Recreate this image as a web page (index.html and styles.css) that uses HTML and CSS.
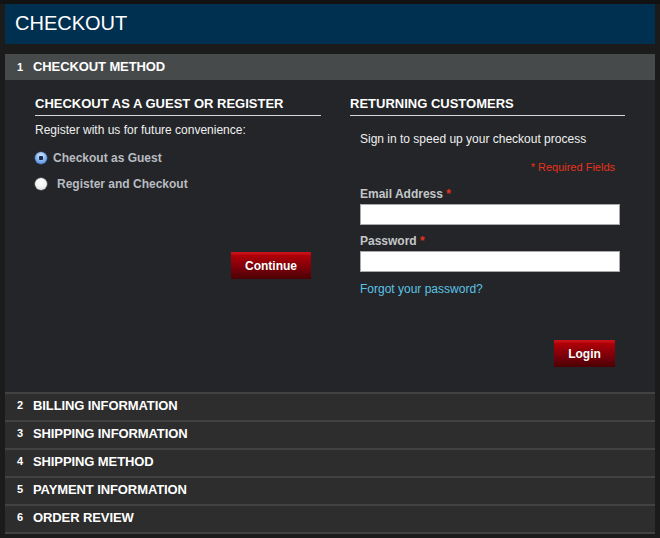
FILE: index.html
```html
<!DOCTYPE html>
<html>
<head>
<meta charset="utf-8">
<link rel="stylesheet" href="styles.css">
</head>
<body>
<div class="page">
  <div class="title-bar"><h1>CHECKOUT</h1></div>

  <div class="steps">
    <section class="step active">
      <div class="step-head"><span class="num">1</span><span class="step-title">CHECKOUT METHOD</span></div>
      <div class="step-body">
        <div class="col col-left">
          <h3 class="col-title">CHECKOUT AS A GUEST OR REGISTER</h3>
          <p class="intro">Register with us for future convenience:</p>
          <label class="radio-row"><span class="radio checked"></span><span class="radio-label">Checkout as Guest</span></label>
          <label class="radio-row second"><span class="radio"></span><span class="radio-label">Register and Checkout</span></label>
          <div class="btn-row continue-row"><button class="btn">Continue</button></div>
        </div>
        <div class="col col-right">
          <h3 class="col-title">RETURNING CUSTOMERS</h3>
          <div class="form">
            <p class="signin">Sign in to speed up your checkout process</p>
            <p class="required">* Required Fields</p>
            <label class="field-label">Email Address <em>*</em></label>
            <input class="field" type="text">
            <label class="field-label">Password <em>*</em></label>
            <input class="field" type="password">
            <a class="forgot" href="#">Forgot your password?</a>
            <div class="btn-row login-row"><button class="btn">Login</button></div>
          </div>
        </div>
      </div>
    </section>
    <section class="step"><div class="step-head"><span class="num">2</span><span class="step-title">BILLING INFORMATION</span></div></section>
    <section class="step"><div class="step-head"><span class="num">3</span><span class="step-title">SHIPPING INFORMATION</span></div></section>
    <section class="step"><div class="step-head"><span class="num">4</span><span class="step-title">SHIPPING METHOD</span></div></section>
    <section class="step"><div class="step-head"><span class="num">5</span><span class="step-title">PAYMENT INFORMATION</span></div></section>
    <section class="step last"><div class="step-head"><span class="num">6</span><span class="step-title">ORDER REVIEW</span></div></section>
  </div>
</div>
</body>
</html>
```

FILE: styles.css
```css
* { box-sizing: border-box; }
html, body { margin: 0; padding: 0; }
body {
  background: #1b1b1b;
  font-family: "Liberation Sans", Arial, Helvetica, sans-serif;
  color: #fff;
  width: 660px;
  height: 538px;
  overflow: hidden;
}
.page {
  padding: 4px 5px 0 5px;
  background: linear-gradient(#121212 0, #121212 4px, #1b1b1b 4px);
}
.title-bar {
  height: 40px;
  background: #00304f;
  display: flex;
  align-items: center;
  padding-left: 10px;
  padding-bottom: 3px;
}
.title-bar h1 {
  margin: 0;
  font-size: 20px;
  font-weight: normal;
  color: #fff;
  line-height: 1;
}
.steps { margin-top: 10px; }
.step-head {
  display: flex;
  align-items: center;
  height: 26px;
  padding-left: 12px;
  padding-bottom: 4px;
  background: #2d2d2d;
}
.step.active .step-head { background: #474a4b; padding-bottom: 1px; }
.step:not(.active) { border-top: 2px solid #424242; }
.step.last { border-bottom: 2px solid #424242; }
.num {
  font-size: 11px;
  font-weight: bold;
  width: 16px;
}
.step-title {
  font-size: 13px;
  font-weight: bold;
  letter-spacing: -0.1px;
}
.step-body {
  background: #232528;
  height: 312px;
  display: flex;
  padding: 16px 30px 0 30px;
  gap: 29px;
}
.col { display: flex; flex-direction: column; }
.col-left { width: 286px; }
.col-right { width: 275px; }
.col-title {
  margin: 0;
  font-size: 13px;
  font-weight: bold;
  line-height: 16px;
  padding-bottom: 3px;
  border-bottom: 1px solid #d8d8d8;
}
.intro {
  margin: 6px 0 0 0;
  font-size: 12px;
  line-height: 16px;
  color: #f0f0f0;
}
.radio-row {
  display: flex;
  align-items: center;
  margin-top: 13px;
  height: 14px;
}
.radio-row.second { margin-top: 12px; }
.radio {
  width: 12px;
  height: 12px;
  border-radius: 50%;
  background: radial-gradient(circle at 50% 30%, #ffffff 0%, #f2f2f2 55%, #cfcfcf 100%);
  box-shadow: 0 0 0 0.5px #888;
  flex: none;
}
.radio.checked {
  background: radial-gradient(circle at 50% 50%, #1a2a45 0, #1a2a45 2px, transparent 2.5px),
              radial-gradient(circle at 50% 30%, #cfe3ff 0%, #7fb0f0 55%, #3d7fd8 100%);
  box-shadow: 0 0 0 0.5px #3a64a8;
}
.radio-label {
  font-size: 12px;
  font-weight: bold;
  color: #b9bcc0;
  margin-left: 6px;
}
.radio-row.second .radio-label { margin-left: 10px; }
.btn-row { display: flex; justify-content: flex-end; padding-right: 10px; }
.continue-row { margin-top: 61px; }
.btn {
  font-family: "Liberation Sans", Arial, sans-serif;
  font-size: 12px;
  font-weight: bold;
  color: #fff;
  border: 0;
  height: 27px;
  padding: 0 10px;
  background: linear-gradient(#c8101a 0, #c8101a 2px, #b00008 3px, #80000a 55%, #4a0005 100%);
  text-shadow: 0 0 1px #600;
}
.continue-row .btn { width: 80px; }
.login-row .btn { width: 61px; }
.form { padding-left: 10px; display: flex; flex-direction: column; }
.signin {
  margin: 15px 0 0 0;
  font-size: 12px;
  line-height: 16px;
  color: #f0f0f0;
}
.required {
  margin: 13px 0 0 0;
  font-size: 11px;
  line-height: 14px;
  color: #e8321c;
  text-align: right;
  padding-right: 10px;
}
.field-label {
  margin-top: 13px;
  font-size: 12px;
  font-weight: bold;
  line-height: 14px;
  color: #c4c7ca;
}
.field-label em { font-style: normal; color: #e8321c; }
.field {
  margin-top: 3px;
  width: 260px;
  height: 21px;
  border: 1px solid #a9a9a9;
  background: #fff;
  padding: 0;
}
.field + .field-label { margin-top: 9px; }
.forgot {
  margin-top: 10px;
  font-size: 12px;
  line-height: 14px;
  color: #5cc3e6;
  text-decoration: none;
}
.login-row { margin-top: 44px; padding-right: 10px; }
```
